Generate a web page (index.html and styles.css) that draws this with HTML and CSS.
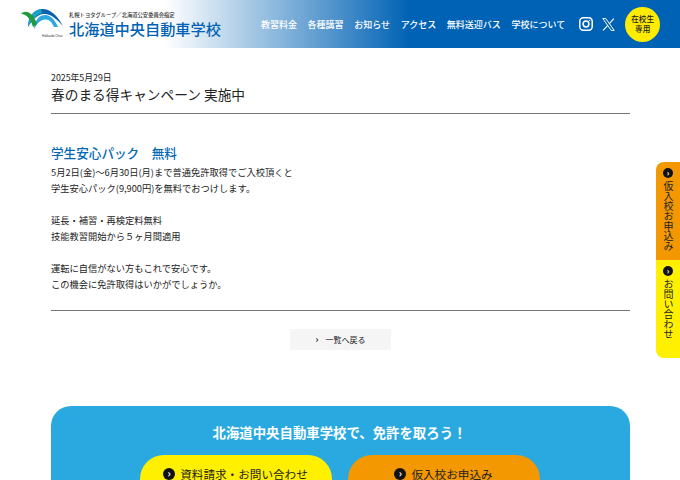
FILE: index.html
```html
<!DOCTYPE html>
<html lang="ja">
<head>
<meta charset="utf-8">
<title>春のまる得キャンペーン 実施中</title>
<link rel="stylesheet" href="styles.css">
</head>
<body>
<header class="header">
  <a class="brand" href="#">
    <span class="logo">
      <svg width="44" height="30" viewBox="0 0 44 30" fill="none">
        <path d="M8 20 C8 11 13 3 21 2 C30 1 38 9 43 19 C37 12 30 6 23 7 C17 8 12 13 8 20 Z" fill="#0f63ad"/>
        <path d="M8 20 C8 11 13 3 21 2 L22 6 C16 8 11 13 8 20 Z" fill="#1aa3c9"/>
        <path d="M14 23 C14 14 19 8 25 8 C31 8 35 13 38 20 L34 20 C32 15 29 12 25 12.5 C20 13 16 17 14 23 Z" fill="#2aa8e0"/>
        <path d="M1 7 C6 2 13 6 17 17 L13 20 C11 13 7 7 1 7 Z" fill="#1f9a3c"/>
      </svg>
      <span class="logo-tag">Hokkaido Chuo</span>
    </span>
    <span class="brand-text">
      <span class="brand-sub">札幌トヨタグループ／北海道公安委員会指定</span>
      <span class="brand-name">北海道中央自動車学校</span>
    </span>
  </a>
  <nav class="nav">
    <a href="#">教習料金</a>
    <a href="#">各種講習</a>
    <a href="#">お知らせ</a>
    <a href="#">アクセス</a>
    <a href="#">無料送迎バス</a>
    <a href="#">学校について</a>
  </nav>
  <div class="social">
    <svg width="14" height="14" viewBox="0 0 14 14" fill="none" stroke="#fff" stroke-width="1.5">
      <rect x=".8" y=".8" width="12.4" height="12.4" rx="3.4"/>
      <circle cx="7" cy="7" r="2.9"/>
      <circle cx="10.6" cy="3.4" r=".7" fill="#fff" stroke="none"/>
    </svg>
    <svg width="13" height="13" viewBox="0 0 13 13" fill="none" stroke="#fff">
      <path d="M.8 .6 H3.8 L12.2 12.4 H9.2 Z" stroke-width="1"/>
      <path d="M11.8 .6 L7.4 5.7 M5.6 7.7 L1 12.4" stroke-width="1.1"/>
    </svg>
  </div>
  <a class="student" href="#">在校生<br>専用</a>
</header>

<main class="main">
  <p class="date">2025年5月29日</p>
  <h1 class="title">春のまる得キャンペーン 実施中</h1>
  <article class="article">
    <h2 class="subhead">学生安心パック　無料</h2>
    <p class="text">5月2日(金)〜6月30日(月)まで普通免許取得でご入校頂くと<br>学生安心パック(9,900円)を無料でおつけします。</p>
    <p class="text">延長・補習・再検定料無料<br>技能教習開始から５ヶ月間適用</p>
    <p class="text">運転に自信がない方もこれで安心です。<br>この機会に免許取得はいかがでしょうか。</p>
  </article>
  <div class="back-wrap"><a class="back" href="#"><span class="back-arrow">›</span>一覧へ戻る</a></div>
  <section class="cta">
    <h2 class="cta-title">北海道中央自動車学校で、免許を取ろう！</h2>
    <div class="cta-buttons">
      <a class="cta-btn yellow" href="#"><span class="dot">›</span>資料請求・お問い合わせ</a>
      <a class="cta-btn orange" href="#"><span class="dot">›</span>仮入校お申込み</a>
    </div>
  </section>
</main>

<aside class="side">
  <a class="side-tab orange" href="#"><span class="dot small">›</span><span class="vert">仮入校お申込み</span></a>
  <a class="side-tab yellow" href="#"><span class="dot small">›</span><span class="vert">お問い合わせ</span></a>
</aside>
</body>
</html>
```
FILE: styles.css
```css
* { box-sizing: border-box; }
html, body { margin: 0; padding: 0; }
body {
  width: 680px;
  height: 480px;
  overflow: hidden;
  position: relative;
  background: #fff;
  color: #222;
  font-family: "Noto Sans CJK JP", "Noto Sans", sans-serif;
}
a { color: inherit; text-decoration: none; }
p, h1, h2 { margin: 0; font-weight: 400; }

.header {
  height: 48px;
  display: flex;
  align-items: center;
  padding-left: 20px;
  background: linear-gradient(90deg, #fff 0, #fff 165px, #0062b4 410px, #0062b4 100%);
}
.brand { display: flex; align-items: center; gap: 5px; width: 230px; }
.logo { position: relative; display: block; width: 44px; height: 34px; }
.logo svg { display: block; }
.logo-tag {
  position: absolute;
  left: 22px;
  top: 27px;
  font-size: 3px;
  white-space: nowrap;
  color: #333;
  font-family: "Liberation Sans", sans-serif;
}
.brand-text { display: flex; flex-direction: column; }
.brand-sub { font-size: 5.3px; line-height: 8px; color: #333; font-weight: 500; white-space: nowrap; }
.brand-name { font-size: 15.2px; line-height: 18px; color: #0062b4; font-weight: 500; white-space: nowrap; }

.nav {
  display: flex;
  gap: 10.6px;
  margin-left: 11px;
  font-size: 9px;
  font-weight: 500;
  color: #fff;
  white-space: nowrap;
}
.social { display: flex; align-items: center; gap: 9px; margin-left: 14px; }
.student {
  width: 35px;
  height: 35px;
  margin-left: 10px;
  border-radius: 50%;
  background: #ffec00;
  color: #222;
  font-size: 7.6px;
  line-height: 10px;
  font-weight: 500;
  text-align: center;
  display: flex;
  align-items: center;
  justify-content: center;
}

.main { padding: 24px 50px 0 51px; }
.date { font-size: 8.8px; line-height: 12px; }
.title {
  font-size: 13.7px;
  line-height: 20px;
  padding-bottom: 9px;
  border-bottom: 1px solid #777;
}
.article { padding-top: 30px; padding-bottom: 18px; border-bottom: 1px solid #777; }
.subhead { font-size: 12.6px; line-height: 18px; font-weight: 500; color: #0068b7; margin-bottom: 2px; }
.text { font-size: 9.25px; line-height: 16px; margin-bottom: 16px; }
.text:last-child { margin-bottom: 0; }

.back-wrap { display: flex; justify-content: center; margin-top: 18px; }
.back {
  width: 101px;
  height: 21px;
  background: #f5f5f5;
  font-size: 8px;
  display: flex;
  align-items: center;
  justify-content: center;
  gap: 7px;
}
.back-arrow { font-weight: 700; font-size: 9px; line-height: 10px; }

.cta {
  margin-top: 56px;
  height: 120px;
  padding-top: 17px;
  background: #29a9e0;
  border-radius: 20px 20px 0 0;
}
.cta-title { font-size: 13.4px; line-height: 18px; font-weight: 700; color: #fff; text-align: center; margin-left: -2px; }
.cta-buttons { display: flex; justify-content: center; gap: 16px; margin-top: 14px; padding-right: 2px; }
.cta-btn {
  width: 192px;
  height: 50px;
  border-radius: 24px;
  padding-top: 11px;
  display: flex;
  justify-content: center;
  align-items: flex-start;
  gap: 5px;
  font-size: 11.6px;
  line-height: 16px;
  color: #222;
}
.yellow { background: #fff000; }
.orange { background: #f39800; }
.dot {
  width: 12px;
  height: 12px;
  margin-top: 2px;
  border-radius: 50%;
  background: #111;
  color: #fff;
  font-size: 10px;
  line-height: 10px;
  font-weight: 700;
  text-align: center;
  flex: none;
}

.side { position: absolute; right: 0; top: 162px; width: 24px; display: flex; flex-direction: column; }
.side-tab {
  height: 98px;
  padding-top: 6px;
  display: flex;
  flex-direction: column;
  align-items: center;
  gap: 3px;
  font-size: 10px;
  color: #222;
}
.side-tab.orange { border-radius: 8px 0 0 0; }
.side-tab.yellow { border-radius: 0 0 0 8px; }
.dot.small { width: 10px; height: 10px; margin-top: 0; font-size: 8px; line-height: 9px; }
.vert { writing-mode: vertical-rl; line-height: 12px; }
```
